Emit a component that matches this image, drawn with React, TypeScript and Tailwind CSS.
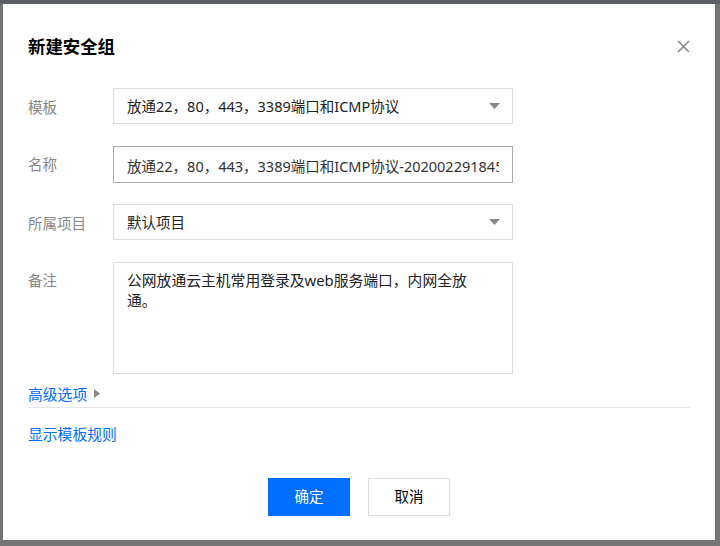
import React from 'react';

const font = {
  fontFamily: '"Noto Sans", "Noto Sans CJK SC", sans-serif',
};

function Caret() {
  return (
    <svg width="11" height="6" viewBox="0 0 11 6" className="shrink-0">
      <path d="M0 0 H11 L5.5 6 Z" fill="#888888" />
    </svg>
  );
}

function Row({ label, children }: { label: string; children: React.ReactNode }) {
  return (
    <div className="flex items-start">
      <div className="w-[85px] h-[36px] flex items-center pt-[3px] text-[14.5px] text-[#888888]">{label}</div>
      {children}
    </div>
  );
}

export default function App() {
  return (
    <div className="w-[720px] h-[546px] bg-[#757575] overflow-hidden" style={font}>
      <div className="h-[4px] bg-[#5d5f66]" />
      <div className="pl-[3px]">
        <div className="w-[712px] h-[536px] bg-white flex flex-col">
          {/* header */}
          <div className="flex items-center justify-between px-[25px] pt-[30px]">
            <h2 className="h-[24px] leading-[24px] text-[17.4px] font-bold text-[#000000]">新建安全组</h2>
            <svg width="13" height="13" viewBox="0 0 13 13">
              <path d="M1 1 L12 12 M12 1 L1 12" stroke="#888888" strokeWidth="1.6" />
            </svg>
          </div>

          {/* form */}
          <div className="flex flex-col gap-[21.5px] px-[25px] mt-[30px]">
            <Row label="模板">
              <div className="w-[400px] h-[36px] border border-[#dddddd] flex items-center justify-between pl-[13px] pr-[12px]">
                <span className="pt-[2px] text-[14.5px] text-[#222222]">放通22，80，443，3389端口和ICMP协议</span>
                <Caret />
              </div>
            </Row>
            <Row label="名称">
              <input
                readOnly
                value="放通22，80，443，3389端口和ICMP协议-202002291845"
                className="w-[400px] h-[37px] border border-[#aaaaaa] px-[13px] pt-[3px] text-[14.5px] text-[#333333] outline-none"
                style={font}
              />
            </Row>
            <Row label="所属项目">
              <div className="w-[400px] h-[36px] border border-[#dddddd] flex items-center justify-between pl-[13px] pr-[12px]">
                <span className="pt-[2px] text-[14.5px] text-[#222222]">默认项目</span>
                <Caret />
              </div>
            </Row>
            <Row label="备注">
              <textarea
                readOnly
                value="公网放通云主机常用登录及web服务端口，内网全放通。"
                className="w-[400px] h-[112px] border border-[#dddddd] pl-[13px] pr-[36px] pt-[7px] text-[14.8px] leading-[20px] text-[#222222] resize-none outline-none"
                style={font}
              />
            </Row>
          </div>

          {/* links */}
          <div className="px-[25px] mt-[10px]">
            <div className="flex items-center h-[20px] gap-[7px]">
              <span className="pt-[2px] text-[14.8px] text-[#006eff]">高级选项</span>
              <svg width="6" height="9" viewBox="0 0 6 9">
                <path d="M0 0 L6 4.5 L0 9 Z" fill="#888888" />
              </svg>
            </div>
            <div className="mt-[3px] h-px bg-[#e5e5e5]" />
            <div className="mt-[15px] h-[20px] leading-[20px] pt-[1px] text-[14.8px] text-[#006eff]">显示模板规则</div>
          </div>

          {/* footer */}
          <div className="flex justify-center gap-[18px] mt-[35px]">
            <button className="w-[82px] h-[38px] bg-[#006eff] text-white text-[14.5px]">确定</button>
            <button className="w-[82px] h-[38px] bg-white border border-[#dddddd] text-[#000000] text-[14.5px]">取消</button>
          </div>
        </div>
      </div>
    </div>
  );
}
